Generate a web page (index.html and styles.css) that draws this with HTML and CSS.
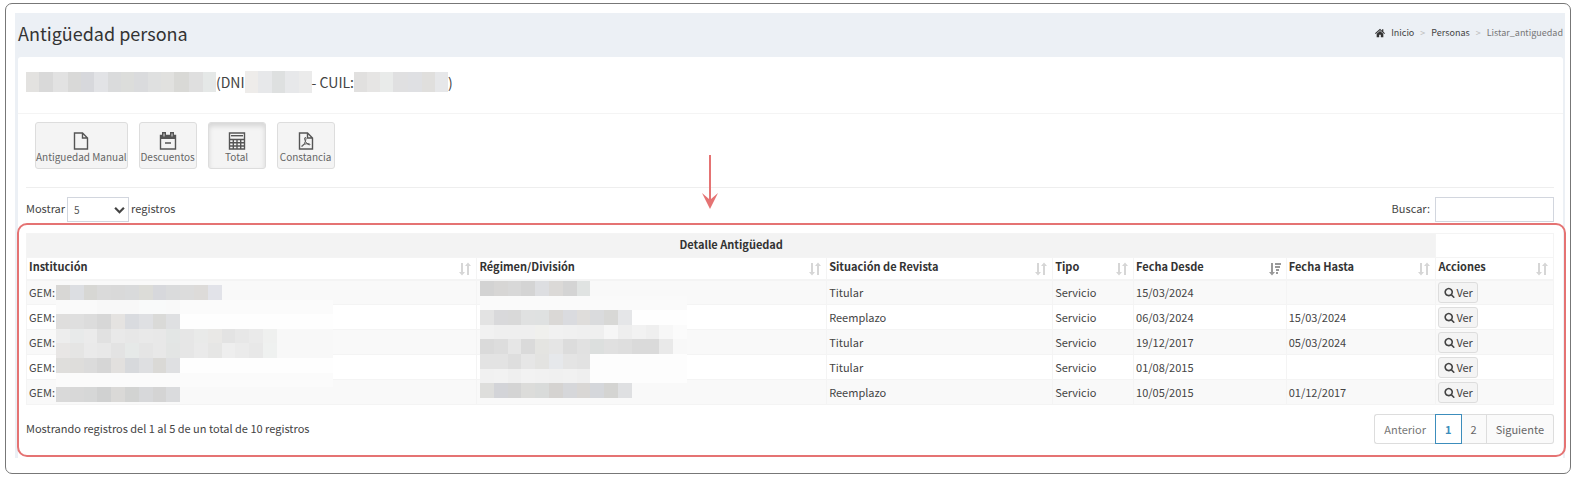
FILE: index.html
```
<!DOCTYPE html>
<html lang="es">
<head>
  <meta charset="UTF-8">
  <meta name="viewport" content="width=device-width,initial-scale=1">
  <title>Antigüedad persona</title>
  <link rel="stylesheet" href="styles.css">
</head>
<body>

<svg class="sprite" aria-hidden="true">
  <symbol id="i-search" viewBox="0 0 1792 1792"><path d="M1216 832q0-185-131.5-316.5t-316.5-131.5-316.5 131.5-131.5 316.5 131.5 316.5 316.5 131.5 316.5-131.5 131.5-316.5zm512 832q0 52-38 90t-90 38q-54 0-90-38l-343-342q-179 124-399 124-143 0-273.5-55.5t-225-150-150-225-55.5-273.5 55.5-273.5 150-225 225-150 273.5-55.5 273.5 55.5 225 150 150 225 55.5 273.5q0 220-124 399l343 343q37 37 37 90z"/></symbol>
  <symbol id="i-sort" viewBox="0 0 12 14"><path d="M2 1h2v9h2l-3 3.5L0 10h2zM8 13h2V4h2L9 .5 6 4h2z"/></symbol>
  <symbol id="i-sort-desc" viewBox="0 0 12 14"><path d="M2 1h2v9h2l-3 3.5L0 10h2zM6 1h6v2H6zM6 4h5v2H6zM7 7h3v2H7zM7 10h2v2H7z"/></symbol>
</svg>

<div class="frame">
  <div class="content">
    <header class="content-header">
      <h1>Antigüedad persona</h1>
      <nav class="breadcrumb">
        <svg class="home" viewBox="0 0 12 12"><path d="M6 1 0 6.3l.8.9L6 2.7l5.2 4.5.8-.9-2-1.8V1.5H8.500v1.700zM6 3.600 2 7v4h3V8h2v3h3V7z"/></svg>
        <a href="#">Inicio</a><span class="sep">&gt;</span><a href="#">Personas</a><span class="sep">&gt;</span><span class="current">Listar_antiguedad</span>
      </nav>
    </header>

    <main class="box">
      <div class="box-header">
        <span class="mask mask-name"></span><span>(DNI</span><span class="mask mask-dni"></span><span>- CUIL:</span><span class="mask mask-cuil"></span><span>)</span>
      </div>

      <div class="box-body">
        <div class="toolbar">
          <button class="btn-app wide" type="button">
            <svg viewBox="0 0 20 20"><path class="line" d="M3.500 2h8l5 5v11h-13zM11.500 2v5h5"/></svg>
            Antiguedad Manual
          </button>
          <button class="btn-app" type="button">
            <svg viewBox="0 0 20 20"><path class="line" d="M2.500 4.500h15V18h-15zM7 12h6"/><path d="M2 4h16v4H2zM4 1h4v5H4zM12 1h4v5h-4z"/><path class="gap" d="M6 2.500v3M14 2.500v3"/></svg>
            Descuentos
          </button>
          <button class="btn-app active" type="button">
            <svg viewBox="0 0 20 20"><path class="line" d="M2.500 2h15v16h-15zM2 8.500h16M2 11.700h16M2 15h16M6.300 8v10M10 8v10M13.700 8v10"/><path class="line" d="M4 4.700h12"/></svg>
            Total
          </button>
          <button class="btn-app" type="button">
            <svg viewBox="0 0 20 20"><path class="line" d="M3.500 2h8l5 5v11h-13zM11.500 2v5h5"/><path class="thin" d="M9 6.500c1.500-.5 1 2 .3 4-.8 2.200-2.300 4.700-3.300 5-1 0 0-1.500 2.500-2.300 2.500-.8 5.500-.8 5.500.2s-3 .3-4.500-2.900c-.8-1.700-1.200-3.700-.5-4z"/></svg>
            Constancia
          </button>
        </div>

        <div class="controls">
          <div class="length">
            <label for="length">Mostrar</label>
            <div class="select-wrap">
              <select id="length">
                <option>5</option>
                <option>10</option>
                <option>25</option>
              </select>
              <svg viewBox="0 0 10 7"><path d="M1 1.500 5 5.500l4-4"/></svg>
            </div>
            <span>registros</span>
          </div>
          <div class="search">
            <label for="search">Buscar:</label>
            <input id="search" type="text">
          </div>
          <svg class="arrow" viewBox="0 0 16 54"><path d="M7 0h2v44l7-6-8 16-8-16 7 6z"/></svg>
        </div>

        <section class="detail">
          <table>
            <colgroup>
              <col class="c-inst"><col class="c-reg"><col class="c-sit"><col class="c-tipo"><col class="c-desde"><col class="c-hasta"><col class="c-acc">
            </colgroup>
            <thead>
              <tr class="group">
                <th colspan="6">Detalle Antigüedad</th>
                <th class="empty"></th>
              </tr>
              <tr class="names">
                <th><div><span>Institución</span><svg><use href="#i-sort"/></svg></div></th>
                <th><div><span>Régimen/División</span><svg><use href="#i-sort"/></svg></div></th>
                <th><div><span>Situación de Revista</span><svg><use href="#i-sort"/></svg></div></th>
                <th><div><span>Tipo</span><svg><use href="#i-sort"/></svg></div></th>
                <th><div><span>Fecha Desde</span><svg class="sorted"><use href="#i-sort-desc"/></svg></div></th>
                <th><div><span>Fecha Hasta</span><svg><use href="#i-sort"/></svg></div></th>
                <th><div><span>Acciones</span><svg><use href="#i-sort"/></svg></div></th>
              </tr>
            </thead>
            <tbody>
              <tr>
                <td class="masked">GEM:<svg class="mosaic mosaic-inst" id="mosaic-inst"></svg></td>
                <td class="masked"><svg class="mosaic mosaic-reg" id="mosaic-reg"></svg></td>
                <td>Titular</td><td>Servicio</td><td>15/03/2024</td><td></td>
                <td><button class="btn-ver" type="button"><svg><use href="#i-search"/></svg>Ver</button></td>
              </tr>
              <tr>
                <td>GEM:</td><td></td><td>Reemplazo</td><td>Servicio</td><td>06/03/2024</td><td>15/03/2024</td>
                <td><button class="btn-ver" type="button"><svg><use href="#i-search"/></svg>Ver</button></td>
              </tr>
              <tr>
                <td>GEM:</td><td></td><td>Titular</td><td>Servicio</td><td>19/12/2017</td><td>05/03/2024</td>
                <td><button class="btn-ver" type="button"><svg><use href="#i-search"/></svg>Ver</button></td>
              </tr>
              <tr>
                <td>GEM:</td><td></td><td>Titular</td><td>Servicio</td><td>01/08/2015</td><td></td>
                <td><button class="btn-ver" type="button"><svg><use href="#i-search"/></svg>Ver</button></td>
              </tr>
              <tr>
                <td>GEM:</td><td></td><td>Reemplazo</td><td>Servicio</td><td>10/05/2015</td><td>01/12/2017</td>
                <td><button class="btn-ver" type="button"><svg><use href="#i-search"/></svg>Ver</button></td>
              </tr>
            </tbody>
          </table>

          <div class="table-footer">
            <p>Mostrando registros del 1 al 5 de un total de 10 registros</p>
            <div class="pagination">
              <a class="disabled" href="#">Anterior</a>
              <a class="active" href="#">1</a>
              <a href="#">2</a>
              <a href="#">Siguiente</a>
            </div>
          </div>
        </section>
      </div>
    </main>
  </div>
</div>

<script src="mosaic.js"></script>
</body>
</html>
```
FILE: styles.css
```
* {
  box-sizing: border-box;
}

body {
  margin: 0;
  background: #fff;
  color: #444;
  font-family: "Noto Sans CJK JP", "Noto Sans", sans-serif;
  font-size: 11px;
  line-height: 16px;
}

button,
select,
input {
  font: inherit;
  color: inherit;
}

a {
  color: #444;
  text-decoration: none;
}

svg {
  fill: currentColor;
}

.sprite {
  display: none;
}

.frame {
  margin: 3px 5px 0;
  padding: 9px 5px 15px 9px;
  border: 1px solid #777;
  border-radius: 7px;
}

.content {
  padding: 0 2px 0 3px;
  background: #ecf0f5;
}

.content-header {
  display: flex;
  align-items: center;
  justify-content: space-between;
  height: 44px;
  padding-bottom: 4px;
}

h1 {
  margin: 0;
  color: #333;
  font-size: 18px;
  font-weight: 400;
  line-height: 40px;
}

.breadcrumb {
  display: flex;
  align-items: center;
  font-size: 9px;
}

.home {
  width: 10px;
  height: 10px;
  margin-right: 6px;
  color: #333;
}

.sep {
  margin: 0 6px;
  color: #bbb;
}

.current {
  color: #777;
}

.box {
  background: #fff;
  border-radius: 3px 3px 0 0;
}

.box-header {
  display: flex;
  align-items: center;
  height: 57px;
  padding: 0 8px 7px;
  border-bottom: 1px solid #f4f4f4;
  font-size: 14px;
}

/* hidden personal data */
.mask {
  height: 20px;
}

.mask-name {
  width: 190px;
  background: linear-gradient(90deg, #e3e2e0 7%, #d9d9d9 7% 14%, #e2e2e2 14% 22%, #d9d9d8 22% 29%, #d7d8dc 29% 36%, #e2e3e6 36% 43%, #dadbdc 43% 50%, #dcdddb 50% 57%, #dadbdd 57% 64%, #dfe0e0 64% 71%, #e1e1df 71% 78%, #d9d9d6 78% 86%, #dfdfdf 86% 93%, #e5e8e7 93%);
}

.mask-dni {
  width: 67px;
  height: 22px;
  background: linear-gradient(90deg, #eeecea 20%, #e7e8ea 20% 40%, #dee0e0 40% 60%, #e7e8ea 60% 80%, #ebebeb 80%);
}

.mask-cuil {
  width: 94px;
  background: linear-gradient(90deg, #e1e0df 14%, #e6e5e4 14% 28%, #e9ebea 28% 42%, #e0e0e1 42% 57%, #dfe0e3 57% 72%, #e0dfdd 72% 86%, #e6e7e9 86%);
}

.box-body {
  padding: 8px 9px 14px 8px;
}

.toolbar {
  display: flex;
  gap: 11px;
  padding: 0 0 18px 9px;
  border-bottom: 1px solid #eee;
}

.btn-app {
  display: flex;
  flex-direction: column;
  align-items: center;
  min-width: 58px;
  height: 47px;
  padding: 8px 0 0;
  background: #f4f4f4;
  border: 1px solid #ddd;
  border-radius: 3px;
  color: #666;
  font-size: 10px;
  line-height: 12px;
  cursor: pointer;
}

.btn-app.wide {
  min-width: 90px;
}

.btn-app.active {
  box-shadow: inset 0 3px 5px rgba(0, 0, 0, .125);
}

.btn-app svg {
  width: 20px;
  height: 20px;
  color: #555;
}

.btn-app .line,
.btn-app .thin {
  fill: none;
  stroke: currentColor;
  stroke-width: 1.4;
}

.btn-app .thin {
  stroke-width: 1;
}

.btn-app .gap {
  stroke: #ddd;
}

.controls {
  position: relative;
  display: flex;
  justify-content: space-between;
  padding: 9px 0 11px;
}

.length,
.search {
  display: flex;
  gap: 2px;
  line-height: 22px;
}

.search {
  gap: 5px;
}

.select-wrap {
  position: relative;
}

.select-wrap select {
  display: block;
  width: 62px;
  height: 25px;
  padding: 0 6px;
  background: #fff;
  border: 1px solid #d2d6de;
  border-radius: 0;
  color: #555;
  font-size: 10px;
  appearance: none;
}

.select-wrap svg {
  position: absolute;
  top: 9px;
  right: 4px;
  width: 11px;
  height: 8px;
  fill: none;
  stroke: #444;
  stroke-width: 2;
  pointer-events: none;
}

.search input {
  width: 119px;
  height: 25px;
  border: 1px solid #d2d6de;
}

/* arrow pointing at the detail table */
.arrow {
  position: absolute;
  top: -33px;
  left: 676px;
  width: 16px;
  height: 54px;
  color: #e57373;
}

.detail {
  position: relative;
}

/* highlight around the detail table */
.detail::after {
  content: "";
  position: absolute;
  inset: -10px -12px -13px -9px;
  border: 2px solid #e57373;
  border-radius: 10px;
  pointer-events: none;
}

table {
  width: 100%;
  table-layout: fixed;
  border-collapse: collapse;
}

.c-inst { width: 29.5%; }
.c-reg { width: 22.9%; }
.c-sit { width: 14.8%; }
.c-tipo { width: 5.3%; }
.c-desde { width: 10%; }
.c-hasta { width: 9.8%; }
.c-acc { width: 7.7%; }

th,
td {
  height: 25px;
  padding: 0 2px;
  border: 1px solid #f4f4f4;
  text-align: left;
  white-space: nowrap;
}

th {
  color: #333;
  font-weight: 700;
}

.group th {
  height: 24px;
  padding-bottom: 4px;
  background: #f3f3f3;
  text-align: center;
}

.group .empty {
  background: #fff;
}

.names th {
  height: 22px;
  border-bottom-width: 2px;
}

.names div {
  display: flex;
  align-items: center;
  justify-content: space-between;
}

.names span {
  padding-bottom: 4px;
}

.names svg {
  width: 12px;
  height: 14px;
  margin: 2px 3px 0 0;
  color: #d6d6d6;
}

.names .sorted {
  color: #999;
}

tbody tr:nth-child(odd) {
  background: #f9f9f9;
}

.masked {
  position: relative;
}

.mosaic {
  position: absolute;
  height: 120px;
}

.mosaic-inst {
  top: 4px;
  left: 29px;
  width: 277px;
}

.mosaic-reg {
  top: 0;
  left: 3px;
  width: 207px;
}

.btn-ver {
  display: flex;
  align-items: center;
  gap: 1px;
  height: 21px;
  padding: 0 4px 0 5px;
  background: #f4f4f4;
  border: 1px solid #ddd;
  border-radius: 3px;
  line-height: 19px;
  cursor: pointer;
}

.btn-ver svg {
  width: 11px;
  height: 11px;
}

.table-footer {
  display: flex;
  justify-content: space-between;
  padding-top: 9px;
}

.table-footer p {
  margin: 6px 0 0;
}

.pagination {
  display: flex;
}

.pagination a {
  height: 30px;
  padding: 6px 9px;
  background: #fafafa;
  border: 1px solid #ddd;
  border-left-width: 0;
  color: #666;
}

.pagination .disabled {
  background: #fff;
  border-left-width: 1px;
  border-radius: 3px 0 0 3px;
  border-right-width: 0;
  color: #777;
}

.pagination .active {
  background: #fff;
  border: 1px solid #3c8dbc;
  color: #3c8dbc;
  font-weight: 700;
}

.pagination a:last-child {
  border-radius: 0 3px 3px 0;
}
```
FILE: mosaic.js
```
// each row: tile colours from the left, then the colour for the rest of the row
const mosaics = {
  "mosaic-inst": { width: 277, rows: [
    ["d8d7d5 dcdee2 d7d7d4 dadada d9d9d9 d9dadb dcdcd8 d7d8dc dadbdc dcdcdc dddbd9 e2e3e9", ""],
    ["fafafa fafafa fafafa f8f8f8 f8f8f8 f8f8f8 f9fafa f9fafa f9f9f9", "fbfbfb"],
    ["dfdedd dfdfdf dcdcdc d7d7d7 e5e3e1 d9dbdf dfe0e3 dadad8 dfe0e2", "fefefe"],
    ["ededed e8eaea ebebeb e1e1e1 e9e9e9 e7e7e7 e9e9e9 e8e8e8 e3e6e5 e6e6e6 e9eae9 e9e8e6 e3e3e3 e7e7e7 eaeaea eff0ef", "f8f8f8"],
    ["e8e6e5 e5e5e4 eaeaea e8e8e8 e3e3e3 e6e9e8 e5e5e5 e8e8e8 e3e5e4 e6e6e6 eaeaea e6e6e5 eeeeee ebebeb e8e8e8 eff1f0", "f8f8f8"],
    ["dfdedc dedddb dbdbdb d6d6d6 e2e0de d7d9dc dedfe1 dad9d6 dfe0e2", "fefefe"],
    ["fbfbfb", "fbfbfb"],
    ["d9d9d9 d8d8d8 d6d7d7 d0d1d1 dad9d7 d2d3d2 d7d8da d4d4d4 dadbdd", ""]
  ] },
  "mosaic-reg": { width: 207, rows: [
    ["d3d3d3 d7d6d5 d8d8d8 d4d4d4 dddee1 dbd9d7 d4d4d4 e0e3e2", ""],
    ["fafafa", "fafafa"],
    ["e3e3e3 d9d9db d9d9d9 e0e1e1 dfe1e1 dad8d6 dadbdf dfdddb dadbdd d8d8d6 e5e6e8", "fefefe"],
    ["f1f1f1 efefef efefef efefef f0f0ed f1f1f1 f0f0f0 efefef efefef f6f6f6 eeeeee f2f2f2 efefef f7f7f7", "fbfbfb"],
    ["dadada dddddd e6e6e6 dadada e4e4e1 e5e5e5 dcdcdc e1e1e1 dcdfde e0e0e0 dedede dadada dadada e9e9e9", "f8f8f8"],
    ["e3e3e3 e3e3e3 dedede e6e6e6 e3e3e1 e6e8eb e4e4e4 e2e2e2", "fdfdfd"],
    ["f1f1f1 f2f2f2 efefef f2f2f2 f1f1f1 f0f0f0 f1f1f1 efefef", "fdfdfd"],
    ["dededc d3d4d8 d4d4d4 dcdcda d9dbda d5d3d1 d6d7da d9d7d5 d5d7db d4d4d2 dfe0e2", ""]
  ] }
};

const TILE = 13.8;
const ROW = 14.6;

function addRect(svg, x, y, width, color) {
  const rect = document.createElementNS("http://www.w3.org/2000/svg", "rect");
  rect.setAttribute("x", x);
  rect.setAttribute("y", y);
  rect.setAttribute("width", width);
  rect.setAttribute("height", ROW);
  rect.setAttribute("fill", "#" + color);
  rect.setAttribute("shape-rendering", "crispEdges");
  svg.appendChild(rect);
}

for (const id in mosaics) {
  const svg = document.getElementById(id);
  mosaics[id].rows.forEach(([tiles, rest], i) => {
    if (rest) addRect(svg, 0, i * ROW, mosaics[id].width, rest);
    tiles.split(" ").forEach((color, j) => addRect(svg, j * TILE, i * ROW, TILE, color));
  });
}
```
